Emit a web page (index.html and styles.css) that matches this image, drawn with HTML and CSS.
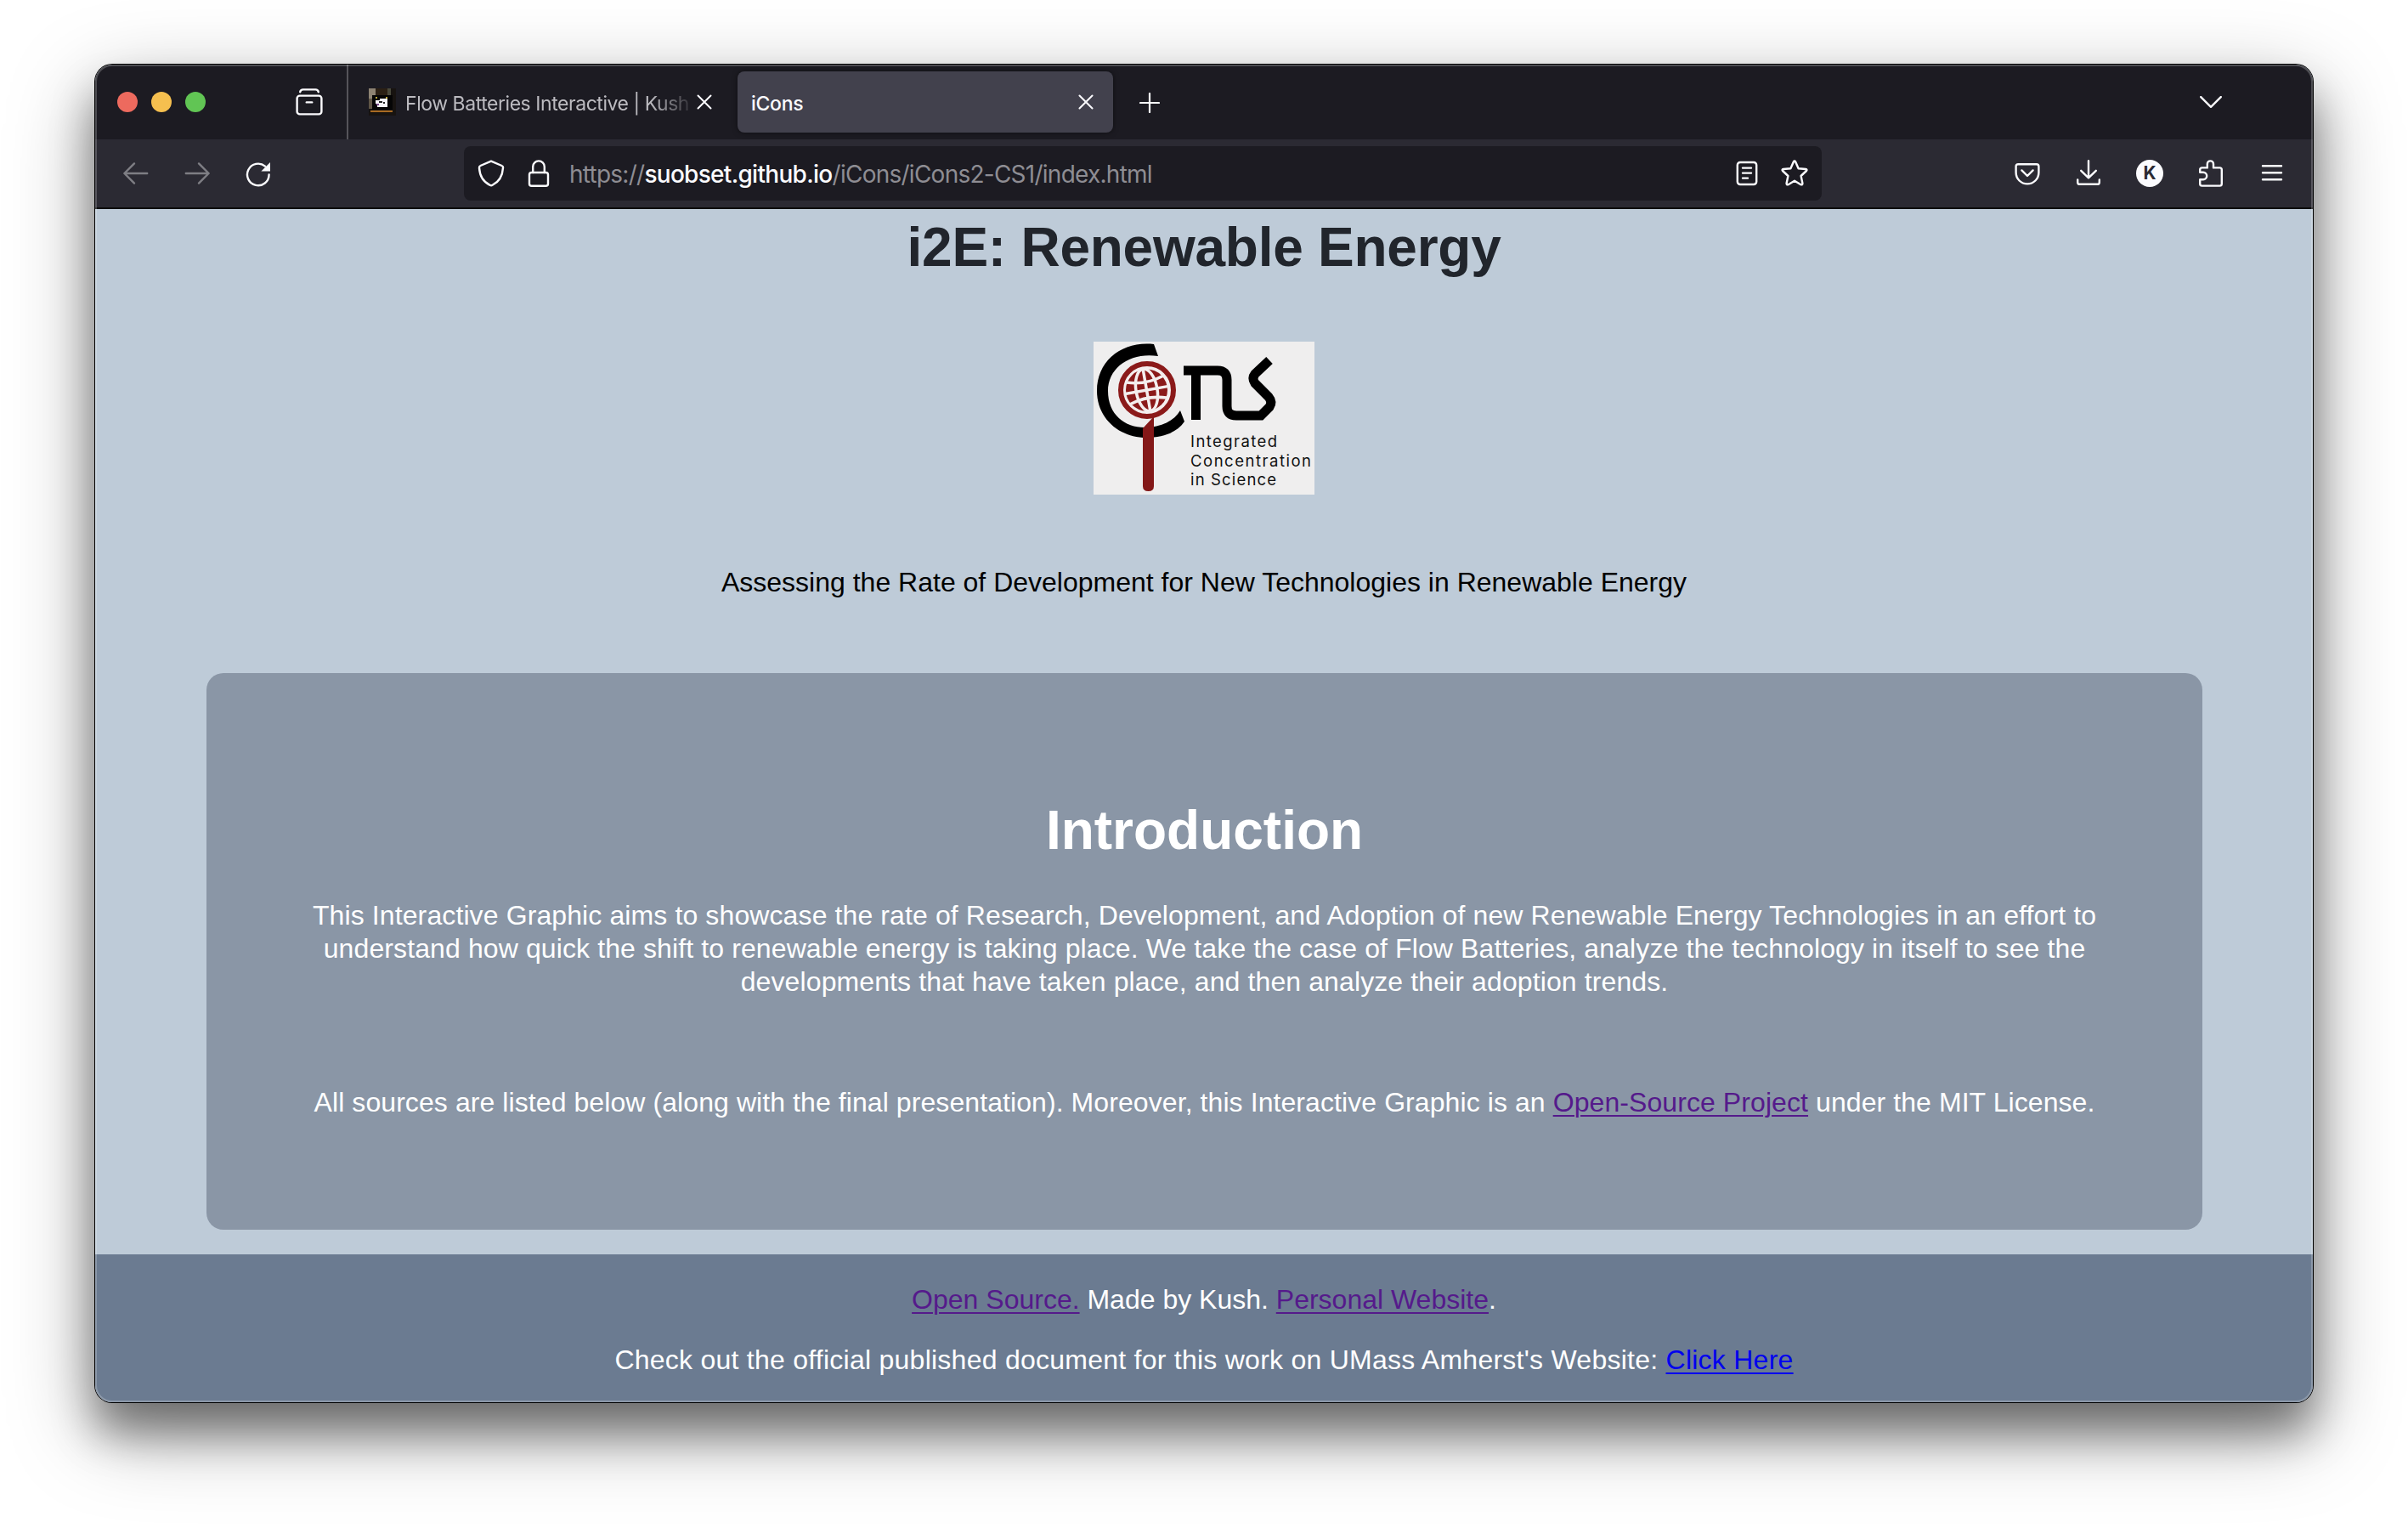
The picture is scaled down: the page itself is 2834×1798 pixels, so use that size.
FILE: index.html
```html
<!DOCTYPE html>
<html lang="en">
<head>
<meta charset="utf-8">
<title>iCons</title>
<link rel="stylesheet" href="styles.css">
</head>
<body>
<div class="window">
  <div class="tabbar">
    <div class="lights"><span class="light red"></span><span class="light yellow"></span><span class="light green"></span></div>
    <svg class="icon recent" viewBox="0 0 16 16"><path d="M2.600 2.100C2.800 1.200 3.400.7 4.300.7h7.400c.9 0 1.500.5 1.700 1.400"/><rect x=".8" y="4.300" width="14.400" height="10.900" rx="1.600"/><path d="M6.400 8.200h3.200"/></svg>
    <div class="tab">
      <svg class="favicon" viewBox="0 0 32 32"><path fill="#171310" d="M0 0h32v32H0z"/><path fill="#8d8373" d="M0 0h8v12H0z"/><path fill="#5f5646" d="M0 12h4v12H0z"/><path fill="#2b2014" d="M8 0h14v8H8z"/><path fill="#4a4a3c" d="M22 0h4v8h-4z"/><path fill="#050505" d="M4 8h24v17H4z"/><path fill="#f4f4f6" d="M8 14h5v-2h9v10H10v-4H8z"/><path fill="#b9a53a" d="M8 10h2v2H8zM20 10h2v2h-2z"/><path fill="#7a4a8a" d="M9 18h3v2H9z"/><path fill="#222" d="M12 15h4v2h-4zM17 16h2v2h-2z"/><path fill="#a86a22" d="M2 26h26v2H2z"/></svg>
      <span class="tab-title faded">Flow Batteries Interactive | Kush</span>
      <svg class="close" viewBox="0 0 18 18"><path d="M1.500 1.500l15 15M16.500 1.500l-15 15"/></svg>
    </div>
    <div class="tab active">
      <span class="tab-title">iCons</span>
      <svg class="close" viewBox="0 0 18 18"><path d="M1.500 1.500l15 15M16.500 1.500l-15 15"/></svg>
    </div>
    <svg class="plus" viewBox="0 0 24 24"><path d="M12 1v22M1 12h22"/></svg>
    <svg class="chevron" viewBox="0 0 24 14"><path d="M1 1l11 11L23 1"/></svg>
  </div>

  <div class="toolbar">
    <div class="nav">
      <svg class="icon dim" viewBox="0 0 16 16"><path d="M14.600 8H1.200M7 2.200L1.200 8 7 13.800"/></svg>
      <svg class="icon dim" viewBox="0 0 16 16"><path d="M1.400 8h13.400M9 2.200L14.800 8 9 13.800"/></svg>
      <svg class="icon" viewBox="0 0 16 16"><path d="M14.300 8.700A6.400 6.400 0 1 1 12 3.800"/><path class="fill" d="M15 1.500v5.300H9.700z"/></svg>
    </div>
    <div class="urlbar">
      <svg class="icon" viewBox="0 0 16 16"><path d="M8 .8l6.300 2.700c.5.2.8.7.7 1.300-.3 4.600-2 8-6.200 10.100-.5.3-1 .3-1.500 0C3 12.800 1.300 9.400 1 4.800c0-.6.2-1.100.7-1.300z"/></svg>
      <svg class="icon lock" viewBox="0 0 16 16"><rect x="2.500" y="7.500" width="11" height="7.900" rx="1.300"/><path d="M4.600 7.500V4.100a3.400 3.400 0 0 1 6.800 0V7.500"/></svg>
      <span class="url">https://<b>suobset.github.io</b>/iCons/iCons2-CS1/index.html</span>
      <svg class="icon reader" viewBox="0 0 16 16"><rect x="2.400" y="1.500" width="11.200" height="13" rx="1.600"/><path d="M5.500 4.800h5M5.500 7.800h5M5.500 10.800h3"/></svg>
      <svg class="icon star" viewBox="0 0 16 16"><path d="M7.400 1.200q.6-.9 1.200 0l1.700 3.900 4.300.4q1 .2.400 1l-3.200 3 .9 4.400q0 1.100-1 .7L8 12.400l-3.700 2.200q-1 .4-1-.7l.9-4.400-3.200-3q-.6-.8.400-1l4.300-.4z"/></svg>
    </div>
    <div class="actions">
      <svg class="icon" viewBox="0 0 16 16"><path d="M2.600 2.600h10.800q1.300 0 1.300 1.300V7.500a6.700 6.700 0 0 1-13.400 0V3.900Q1.300 2.600 2.600 2.600zM4.700 6.200L8 9.500l3.300-3.300"/></svg>
      <svg class="icon" viewBox="0 0 16 16"><path d="M8 .6v10M3.600 6.400L8 10.700l4.400-4.300M1.600 11.700v1.500q0 1.200 1.200 1.200h10.400q1.200 0 1.200-1.200v-1.500"/></svg>
      <span class="avatar">K</span>
      <svg class="icon puzzle" viewBox="0 0 16 16"><path d="M1.600 6V5.900q0-1.200 1.200-1.200H5.900V2.500a1.800 1.800 0 0 1 3.600 0v2.200h3.700q1.200 0 1.200 1.200v8.200q0 1.200-1.200 1.200H2.800q-1.200 0-1.200-1.200V11.600H3.500a2 2 0 0 0 0-4.200H1.600z"/></svg>
      <svg class="icon menu" viewBox="0 0 16 16"><path d="M2.500 3.600h11M2.500 7.600h11M2.500 11.600h11"/></svg>
    </div>
  </div>

  <main class="page">
    <h1 class="title">i2E: Renewable Energy</h1>
    <svg class="logo" viewBox="0 0 260 180">
      <path fill="#efeeee" d="M0 0h260v180H0z"/>
      <path fill="#000" d="M71 3L76 17C44 12 17 30 17 58c0 28 20 43 43 43 20 0 35-8 42-20l5 13C98 107 82 113 62 113 30 113 4 90 4 58 4 22 34-1 71 3z"/>
      <circle cx="63" cy="57" r="31" fill="#f4eeee" stroke="#8b1a1a" stroke-width="6"/>
      <circle cx="62.500" cy="57" r="24.500" fill="#8b1a1a"/>
      <g fill="none" stroke="#f4eeee" stroke-width="3.500" transform="rotate(-10 62.500 57)"><path d="M62.500 31v52M37 57h52M41 44q21 7 43 0M41 70q21-7 43 0"/><ellipse cx="62.500" cy="57" rx="12.500" ry="25"/></g>
      <path fill="#841818" d="M71 88v82q0 6-6.500 6T58 170v-68z"/>
      <path fill="none" stroke="#000" stroke-width="11" d="M106 34h40q11 0 11 11v31q0 11 11 11h29l10-10q4-6-1-12L190 49q-4-6 0-11l17-16"/>
      <path fill="none" stroke="#000" stroke-width="11" d="M120.500 34v58"/>
      <g class="logo-text"><text x="114" y="124" textLength="102">Integrated</text><text x="114" y="146.500" textLength="142">Concentration</text><text x="114" y="169" textLength="101">in Science</text></g>
    </svg>
    <p class="subtitle">Assessing the Rate of Development for New Technologies in Renewable Energy</p>
    <section class="card">
      <h2>Introduction</h2>
      <p class="intro">This Interactive Graphic aims to showcase the rate of Research, Development, and Adoption of new Renewable Energy Technologies in an effort to<br>understand how quick the shift to renewable energy is taking place. We take the case of Flow Batteries, analyze the technology in itself to see the<br>developments that have taken place, and then analyze their adoption trends.</p>
      <p class="sources">All sources are listed below (along with the final presentation). Moreover, this Interactive Graphic is an <a class="visited" href="#">Open-Source Project</a> under the MIT License.</p>
    </section>
  </main>
  <footer class="footer">
    <p><a class="visited" href="#">Open Source.</a> Made by Kush. <a class="visited" href="#">Personal Website</a>.</p>
    <p class="doc">Check out the official published document for this work on UMass Amherst's Website: <a href="#">Click Here</a></p>
  </footer>
</div>
</body>
</html>
```
FILE: styles.css
```css
* { box-sizing: border-box; }
body {
  margin: 0;
  padding: 76px 112px 148px;
  height: 1798px;
  background: #fff;
  overflow: hidden;
  font-family: "Liberation Sans", Arial, sans-serif;
}
p, h1, h2 { margin: 0; font-size: 32px; line-height: 39px; white-space: nowrap; }
.window {
  position: relative;
  display: flex;
  flex-direction: column;
  width: 2610px;
  height: 1574px;
  border-radius: 20px;
  background: #becbd8;
  box-shadow: 0 0 0 1px #000, 0 36px 50px rgba(0,0,0,.4), 0 32px 100px rgba(0,0,0,.36);
}
.window::after {
  content: "";
  position: absolute;
  inset: 0;
  border: 2px solid rgba(255,255,255,.22);
  border-radius: 20px;
  pointer-events: none;
}
svg { flex: none; fill: none; stroke: #fbfbfe; stroke-linecap: round; stroke-linejoin: round; }
.icon { width: 32px; height: 32px; stroke-width: 1.2; }
.tabbar {
  display: flex;
  align-items: center;
  height: 88px;
  background: #1c1b22;
  border-radius: 20px 20px 0 0;
  font-family: Inter, sans-serif;
}
.lights { display: flex; gap: 16px; padding-left: 26px; width: 236px; }
.light { width: 24px; height: 24px; border-radius: 50%; }
.red { background: #ed6a5e; }
.yellow { background: #f5bf4f; }
.green { background: #61c554; }
.recent { margin-right: 28px; }
.tab { display: flex; align-items: center; width: 460px; height: 100%; border-left: 2px solid #55545a; padding: 0 30px 0 24px; }
.favicon { width: 32px; height: 32px; margin-right: 11px; stroke: none; }
.tab-title { flex: 1; color: #fbfbfe; padding-top: 3px; font-size: 23px; font-weight: 500; letter-spacing: -.3px; white-space: nowrap; }
.faded { color: #bcbbc0; font-weight: 400; letter-spacing: -.45px; -webkit-mask-image: linear-gradient(90deg, #000 86%, transparent 102%); mask-image: linear-gradient(90deg, #000 86%, transparent 102%); }
.close { width: 18px; height: 18px; stroke-width: 2; margin-left: 7px; }
.tab.active { width: 442px; height: 72px; padding: 0 23px 0 16px; border: 0; border-radius: 8px; background: #42414d; box-shadow: 0 0 6px rgba(0,0,0,.5); }
.plus { width: 24px; height: 24px; stroke-width: 2.2; margin: 2px 0 0 31px; }
.chevron { width: 26px; height: 15px; stroke-width: 2.2; margin: 0 107px 0 auto; }
.toolbar { display: flex; align-items: center; height: 82px; padding-bottom: 2px; background: #2b2a33; box-shadow: inset 0 -2px #0c0c0d; }
.nav { display: flex; gap: 40px; width: 434px; padding-left: 32px; }
.dim { opacity: .4; }
.fill { fill: #fbfbfe; stroke: none; }
.urlbar { display: flex; align-items: center; width: 1598px; height: 64px; padding: 0 16px; border-radius: 8px; background: #1c1b22; }
.lock { margin-left: 24px; }
.url { flex: 1; margin-left: 20px; color: #8e8d93; font-family: Inter, sans-serif; font-size: 28px; letter-spacing: -.75px; white-space: nowrap; padding-top: 2px; }
.url b { color: #fbfbfe; font-weight: 500; letter-spacing: -.7px; }
.star { margin-left: 24px; }
.actions { display: flex; gap: 40px; margin-left: auto; padding-right: 32px; }
.avatar { width: 32px; height: 32px; border-radius: 50%; background: #fbfbfe; color: #2b2a33; font: 700 21px/32px Inter, sans-serif; text-align: center; }
.page { display: flex; flex-direction: column; align-items: center; height: 1230px; padding-top: 6px; }
.title { color: #21252c; font-size: 64px; line-height: 78px; letter-spacing: -.25px; }
.logo { width: 260px; height: 180px; margin-top: 72px; stroke: none; }
.logo path { stroke-linecap: butt; stroke-linejoin: miter; }
.logo-text { fill: #111; font-family: Inter, sans-serif; font-size: 18.5px; }
.subtitle { margin-top: 84px; }
.card { align-self: stretch; height: 655px; margin: 87px 130px 0 131px; padding-top: 146px; display: flex; flex-direction: column; align-items: center; border-radius: 20px; background: #8a96a6; color: #fff; text-align: center; }
.card h2 { font-size: 64px; line-height: 78px; }
.intro { margin-top: 42px; letter-spacing: .11px; }
.sources { margin-top: 103px; letter-spacing: .08px; }
.footer { flex: 1; display: flex; flex-direction: column; align-items: center; gap: 32px; padding-top: 34px; border-radius: 0 0 20px 20px; background: #6b7b91; color: #fff; }
.doc { letter-spacing: .25px; }
a { color: #0000ee; text-decoration-thickness: 2px; text-underline-offset: 4px; }
.visited { color: #551a8b; }
```
